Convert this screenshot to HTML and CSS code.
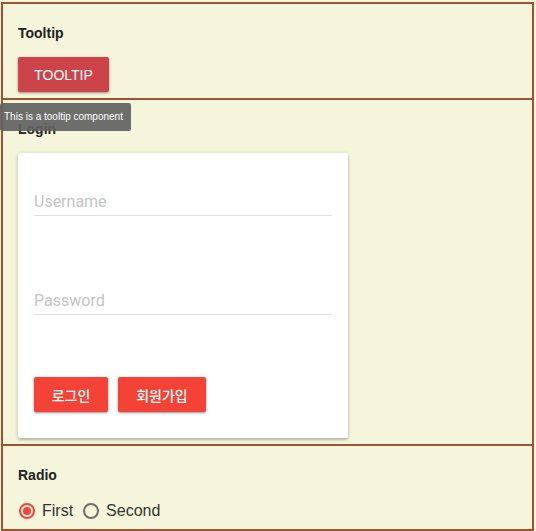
FILE: index.html
```html
<!DOCTYPE html>
<html>
<head>
<meta charset="utf-8">
<link rel="stylesheet" href="styles.css">
</head>
<body>
<div class="page">
  <section class="sec sec-tooltip">
    <h3 class="title">Tooltip</h3>
    <div class="tip-wrap">
      <button class="btn btn-tip">TOOLTIP</button>
      <div class="tooltip">This is a tooltip component</div>
    </div>
  </section>
  <section class="sec sec-login">
    <h3 class="title">Login</h3>
    <div class="card">
      <div class="field field-first"><input class="input" placeholder="Username"></div>
      <div class="field field-second"><input class="input" type="password" placeholder="Password"></div>
      <div class="actions">
        <button class="btn btn-red btn-login">로그인</button>
        <button class="btn btn-red btn-join">회원가입</button>
      </div>
    </div>
  </section>
  <section class="sec sec-radio">
    <h3 class="title">Radio</h3>
    <div class="radios">
      <label class="radio"><span class="dot on"></span><span class="lbl">First</span></label>
      <label class="radio"><span class="dot"></span><span class="lbl">Second</span></label>
    </div>
  </section>
</div>
</body>
</html>
```
FILE: styles.css
```css
html, body {
  margin: 0;
  padding: 0;
  background: #f5f5dc;
  font-family: "Liberation Sans", Arial, sans-serif;
}
.page {
  margin: 2px 2px 0 1px;
  border-left: 2px solid #a0522d;
  border-right: 2px solid #a0522d;
  border-bottom: 2px solid #a0522d;
}
.sec {
  border-top: 2px solid #a0522d;
  padding: 19px 15px 6px 15px;
  position: relative;
}
.title {
  margin: 0;
  font-size: 14px;
  line-height: 20px;
  font-weight: bold;
  color: #222;
}
.sec-tooltip .title { margin-bottom: 14px; }
.sec-login .title { margin-bottom: 14px; }
.sec-radio { padding-bottom: 6px; }
.sec-radio .title { margin-bottom: 14px; }

.tip-wrap {
  position: relative;
  height: 35px;
}
.btn {
  border: none;
  border-radius: 2px;
  color: #fff;
  cursor: pointer;
  box-shadow: 0 1px 3px rgba(0,0,0,0.25), 0 1px 2px rgba(0,0,0,0.2);
}
.btn-tip {
  background: #cc4449;
  height: 35px;
  width: 91px;
  padding: 0;
  font-family: "Liberation Sans", Arial, sans-serif;
  font-size: 14px;
  margin-left: 0;
}
.tooltip {
  position: absolute;
  left: -18px;
  top: 46px;
  width: 131px;
  height: 28px;
  box-sizing: border-box;
  background: rgba(97,97,97,0.92);
  color: #fff;
  font-size: 10px;
  line-height: 28px;
  padding-left: 4px;
  white-space: nowrap;
  border-radius: 2px;
  z-index: 5;
}

.card {
  width: 330px;
  height: 285px;
  box-sizing: border-box;
  background: #fff;
  border-radius: 2px;
  box-shadow: 0 1px 4px rgba(0,0,0,0.2), 0 2px 2px rgba(0,0,0,0.14);
  padding: 35px 15px 0 16px;
}
.field { width: 298px; }
.field-second { margin-top: 71px; }
.input {
  display: block;
  width: 100%;
  box-sizing: border-box;
  height: 28px;
  border: none;
  border-bottom: 1px solid #e0e0e0;
  outline: none;
  background: transparent;
  padding: 0;
  font-family: Roboto, "Liberation Sans", sans-serif;
  font-size: 16px;
  color: #333;
}
.input::placeholder { color: #c4c4c4; }
.actions {
  margin-top: 62px;
  display: flex;
  gap: 10px;
}
.btn-red {
  background: #f44336;
  height: 35px;
  font-family: "Noto Sans CJK KR", "Liberation Sans", sans-serif;
  font-size: 14px;
  font-weight: 500;
  padding: 0;
}
.btn-login { width: 74px; }
.btn-join { width: 88px; }

.radios {
  display: flex;
  align-items: center;
  height: 24px;
  margin-left: 1px;
}
.radio {
  display: flex;
  align-items: center;
  margin-right: 10px;
}
.dot {
  width: 16px;
  height: 16px;
  box-sizing: border-box;
  border: 2px solid #6e6e6e;
  border-radius: 50%;
  position: relative;
}
.dot.on { border-color: #f44336; }
.dot.on::after {
  content: "";
  position: absolute;
  left: 2px;
  top: 2px;
  width: 8px;
  height: 8px;
  border-radius: 50%;
  background: #f44336;
}
.lbl {
  margin-left: 7px;
  font-size: 16px;
  color: #333;
}
```
